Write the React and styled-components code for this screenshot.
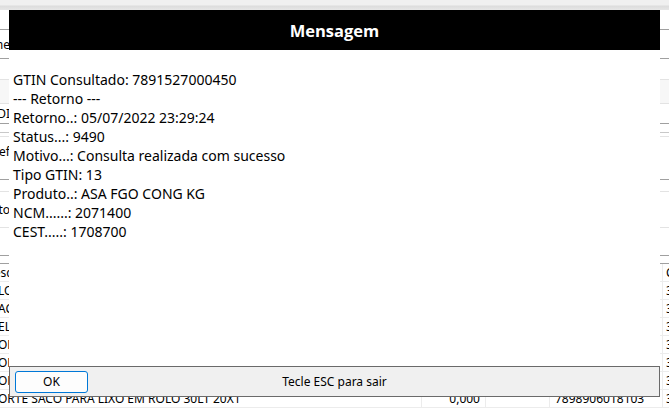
import React from 'react';
import styled, { createGlobalStyle } from 'styled-components';

const GlobalStyle = createGlobalStyle`
  html, body {
    margin: 0;
    padding: 0;
    background: #ffffff;
  }
  body {
    font-family: "Noto Sans", "Open Sans", sans-serif;
  }
`;

// Page frame: the app behind the dialog, plus the dialog on top
const Screen = styled.div`
  position: relative;
  width: 669px;
  height: 412px;
  overflow: hidden;
  background: #ffffff;
`;

const Backdrop = styled.div`
  display: flex;
  flex-direction: column;
  width: 100%;
  font-size: 12px;
  color: #000;
`;

const TopStrip = styled.div`
  height: 10px;
  background: linear-gradient(#f0f0f0 0, #f0f0f0 5px, #dcdcdc 6px, #e6e6e6 10px);
`;

const FormRow = styled.div`
  display: flex;
  align-items: center;
  justify-content: space-between;
  box-sizing: border-box;
  height: ${p => p.h}px;
  background: ${p => p.bg || '#ffffff'};
  border-bottom: 1px solid ${p => p.line || 'transparent'};
`;

// Narrow cell whose text overflows to the left, so only the tail shows
const EdgeLabel = styled.div`
  width: 10px;
  display: flex;
  justify-content: flex-end;
  overflow: hidden;
  white-space: nowrap;
`;

const Grid = styled.div`
  display: flex;
  flex-direction: column;
  border-top: 1px solid #a0a0a0;
`;

const GridRow = styled.div`
  display: grid;
  grid-template-columns: 422px 64px 64px 113px 1fr;
  height: 18px;
  box-sizing: border-box;
  border-bottom: 1px solid #ececec;
  line-height: 17px;
  white-space: nowrap;
`;

const Cell = styled.div`
  overflow: hidden;
  padding: 0 ${p => (p.right ? '5px' : '0')} 0 ${p => p.pad || 0}px;
  text-align: ${p => (p.right ? 'right' : 'left')};
  text-indent: ${p => p.indent || 0}px;
  border-right: 1px solid #ececec;
  &:last-child {
    border-right: none;
  }
`;

// Dialog
const Dialog = styled.div`
  position: absolute;
  left: 9px;
  top: 10px;
  width: 651px;
  height: 387px;
  display: flex;
  flex-direction: column;
`;

const TitleBar = styled.div`
  height: 40px;
  background: #000000;
  color: #ffffff;
  display: flex;
  align-items: center;
  justify-content: center;
  font-family: "Open Sans", "Noto Sans", sans-serif;
  font-weight: 700;
  font-size: 16.5px;
`;

const Body = styled.div`
  flex: 1;
  background: #ffffff;
  padding: 20px 4px 0;
  font-size: 14px;
  line-height: 19px;
  color: #000;
`;

const Line = styled.div`
  white-space: pre;
`;

const Footer = styled.div`
  height: 31px;
  box-sizing: border-box;
  background: #f0f0f0;
  border: 1px solid #6a6a6a;
  display: grid;
  grid-template-columns: 1fr auto 1fr;
  align-items: center;
  padding: 0 5px;
  font-size: 12px;
`;

const OkButton = styled.button`
  justify-self: start;
  width: 73px;
  height: 22px;
  box-sizing: border-box;
  background: #fdfdfd;
  border: 1px solid #0078d7;
  border-radius: 3px;
  font-family: "Noto Sans", sans-serif;
  font-size: 12px;
  color: #000;
  padding: 0;
`;

const Hint = styled.span`
  color: #000;
`;

const formRows = [
  { h: 20, line: '#a0a0a0' },
  { h: 29, line: '#a0a0a0', left: 'Nome' },
  { h: 21, line: '#e3e3e3' },
  { h: 24, line: '#e3e3e3', bg: '#f7f7f7' },
  { h: 20, line: '#a0a0a0', left: 'CÓDI' },
  { h: 9, line: '#c8c8c8' },
  { h: 4, line: '#e3e3e3' },
  { h: 30, left: 'Ref' },
  { h: 13, line: '#a0a0a0' },
  { h: 12, line: '#e3e3e3' },
  { h: 36, line: '#e3e3e3', left: 'Produto' },
  { h: 28, line: '#a0a0a0' },
  { h: 7 },
];

const items = [
  { desc: 'Descrição', qty: '', ean: '', c: 'C', head: true },
  { desc: 'LOUCA BALDE 12L', qty: '0,000', ean: '7896006018101', c: '3' },
  { desc: 'ACUCAR REFINADO', qty: '0,000', ean: '7896006018102', c: '3' },
  { desc: 'ELASTICO FILME PVC', qty: '0,000', ean: '7896006018104', c: '3' },
  { desc: 'ORGANIZADOR 10L', qty: '0,000', ean: '7896006018105', c: '3' },
  { desc: 'ORGANIZADOR 20L', qty: '0,000', ean: '7896006018106', c: '3' },
  { desc: 'ORGANIZADOR 30L', qty: '0,000', ean: '7896006018107', c: '3' },
  { desc: 'ORTE SACO PARA LIXO EM ROLO 30LT 20X1', qty: '0,000', ean: '7898906018103', c: '3' },
];

const lines = [
  'GTIN Consultado: 7891527000450',
  '--- Retorno ---',
  'Retorno..: 05/07/2022 23:29:24',
  'Status...: 9490',
  'Motivo...: Consulta realizada com sucesso',
  'Tipo GTIN: 13',
  'Produto..: ASA FGO CONG KG',
  'NCM......: 2071400',
  'CEST.....: 1708700',
];

export default function App() {
  return (
    <Screen>
      <GlobalStyle />
      <Backdrop>
        <TopStrip />
        {formRows.map((r, i) => (
          <FormRow key={i} h={r.h} line={r.line} bg={r.bg}>
            <EdgeLabel>{r.left || ''}</EdgeLabel>
          </FormRow>
        ))}
        <Grid>
          {items.map((it, i) => (
            <GridRow key={i}>
              <Cell indent={it.head ? -15 : -2}>{it.desc}</Cell>
              <Cell right>{it.qty}</Cell>
              <Cell />
              <Cell pad={5}>{it.ean}</Cell>
              <Cell pad={3}>{it.c}</Cell>
            </GridRow>
          ))}
        </Grid>
      </Backdrop>

      <Dialog>
        <TitleBar>Mensagem</TitleBar>
        <Body>
          {lines.map((l, i) => (
            <Line key={i}>{l}</Line>
          ))}
        </Body>
        <Footer>
          <OkButton>OK</OkButton>
          <Hint>Tecle ESC para sair</Hint>
          <span />
        </Footer>
      </Dialog>
    </Screen>
  );
}
